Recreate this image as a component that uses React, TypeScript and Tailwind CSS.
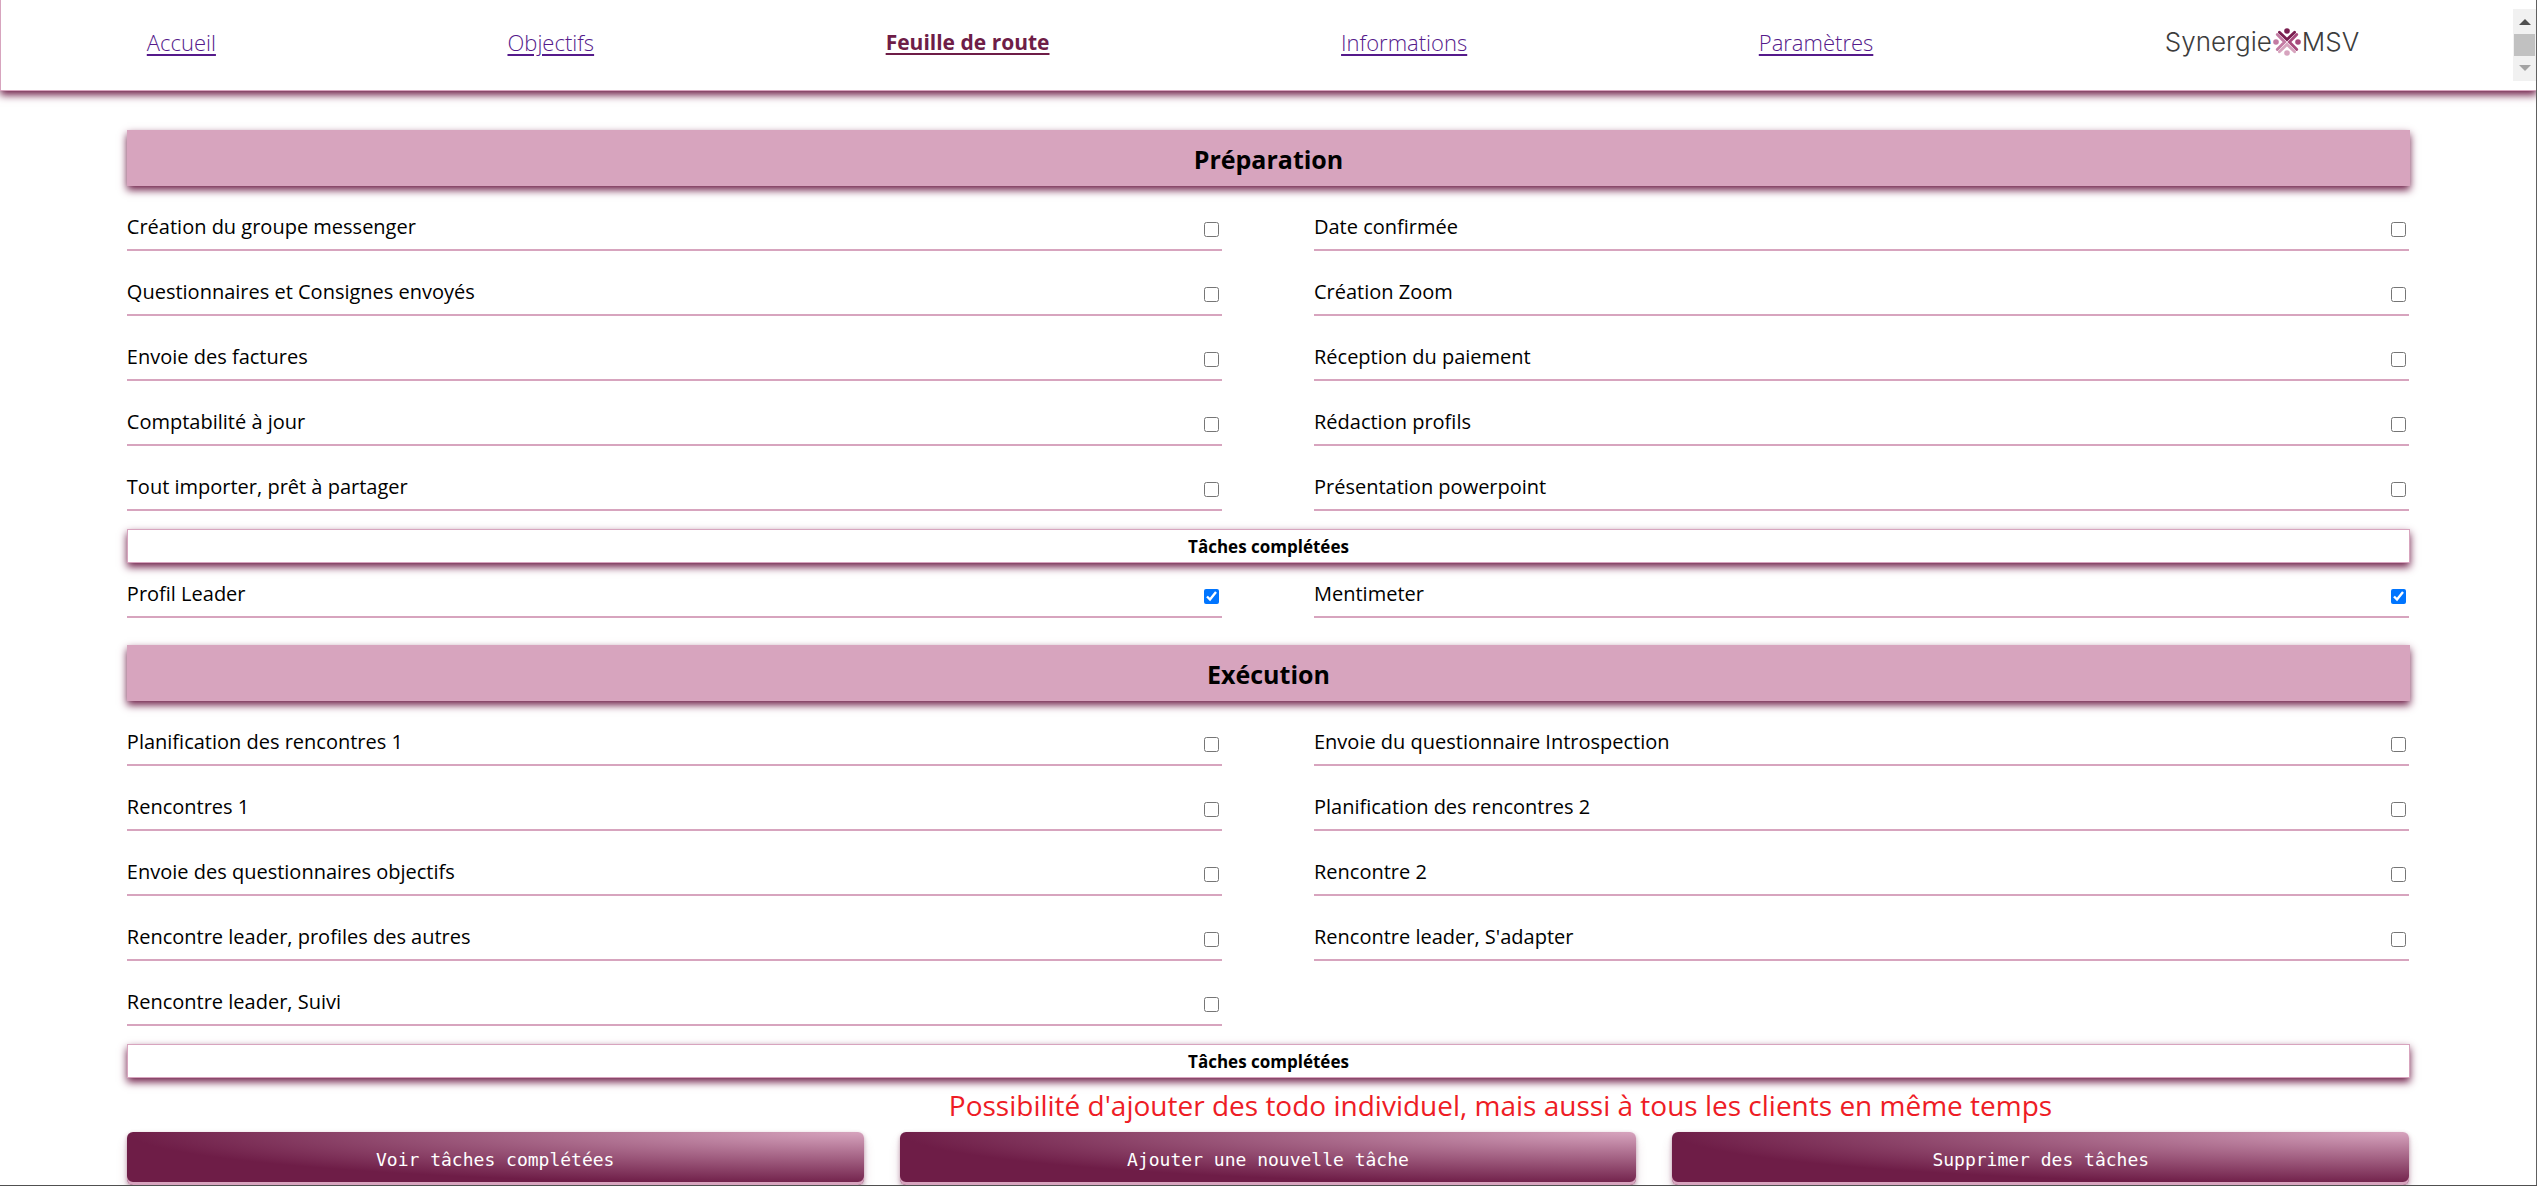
import React from "react";

type Task = { label: string; done?: boolean };

const preparation: Task[] = [
  { label: "Création du groupe messenger" },
  { label: "Date confirmée" },
  { label: "Questionnaires et Consignes envoyés" },
  { label: "Création Zoom" },
  { label: "Envoie des factures" },
  { label: "Réception du paiement" },
  { label: "Comptabilité à jour" },
  { label: "Rédaction profils" },
  { label: "Tout importer, prêt à partager" },
  { label: "Présentation powerpoint" },
];

const preparationDone: Task[] = [
  { label: "Profil Leader", done: true },
  { label: "Mentimeter", done: true },
];

const execution: Task[] = [
  { label: "Planification des rencontres 1" },
  { label: "Envoie du questionnaire Introspection" },
  { label: "Rencontres 1" },
  { label: "Planification des rencontres 2" },
  { label: "Envoie des questionnaires objectifs" },
  { label: "Rencontre 2" },
  { label: "Rencontre leader, profiles des autres" },
  { label: "Rencontre leader, S'adapter" },
  { label: "Rencontre leader, Suivi" },
];

const links = ["Accueil", "Objectifs", "Feuille de route", "Informations", "Paramètres"];
const actions = ["Voir tâches complétées", "Ajouter une nouvelle tâche", "Supprimer des tâches"];

/* One person of the emblem: a head and two raised arms, pointing up. */
function Person({ color, angle }: { color: string; angle: number }) {
  return (
    <g transform={`rotate(${angle} 14 14)`}>
      <circle cx="14" cy="3" r="2.8" fill={color} />
      <path d="M6.4 4.2 L14 11.6 L21.6 4.2" fill="none" stroke={color} strokeWidth="2.8" strokeLinecap="round" />
    </g>
  );
}

function Logo() {
  return (
    <div className="flex items-center font-['Inter',sans-serif] text-[26px] leading-8 font-light text-[#3c3c3c]">
      <span>Synergie</span>
      <svg viewBox="0 0 28 28" className="mx-px size-7" aria-hidden="true">
        <Person color="#c37ba3" angle={270} />
        <Person color="#a84a7c" angle={90} />
        <Person color="#d7a4be" angle={180} />
        <Person color="#7a1f50" angle={0} />
      </svg>
      <span>MSV</span>
    </div>
  );
}

function ScrollBar() {
  return (
    <div className="mt-[9px] flex h-18 w-[23px] shrink-0 flex-col items-center justify-between bg-[#f1f1f1] py-2.5" aria-hidden="true">
      <svg viewBox="0 0 12 6" className="h-1.5 w-3"><path d="M0 6 L6 0 L12 6Z" fill="#505050" /></svg>
      <div className="h-[22px] w-[21px] bg-[#c1c1c1]" />
      <svg viewBox="0 0 12 6" className="h-1.5 w-3"><path d="M0 0 L6 6 L12 0Z" fill="#a3a3a3" /></svg>
    </div>
  );
}

function Tasks({ tasks, done }: { tasks: Task[]; done?: boolean }) {
  return (
    <ul className={done ? "mr-px grid grid-cols-2 gap-x-23 pt-1.5 pb-[27px]" : "mr-px grid grid-cols-2 gap-x-23 gap-y-4 pt-4 pb-[18px]"}>
      {tasks.map((t) => (
        <li key={t.label}>
          <label className="flex h-[49px] items-center justify-between border-b-2 border-[#d7a4be]">
            <span className="pt-0.5 text-[20px] leading-7">{t.label}</span>
            <input type="checkbox" defaultChecked={t.done} className="mt-2 mr-[3px] size-[15px] accent-[#0075ff]" />
          </label>
        </li>
      ))}
    </ul>
  );
}

function Title({ children }: { children: string }) {
  return (
    <h2 className="h-14 bg-[#d7a4be] text-center text-[25px] leading-[58px] font-bold shadow-[0_4px_8px_#6e1d47]">{children}</h2>
  );
}

function DoneTitle() {
  return (
    <h3 className="h-[34px] border border-[#d7a4be] bg-white text-center text-[17px] leading-[34px] font-bold shadow-[0_4px_8px_#6e1d47]">
      Tâches complétées
    </h3>
  );
}

export default function App() {
  return (
    <div className="relative overflow-x-hidden border-b border-[#505050] bg-white font-['Open_Sans','Noto_Sans',sans-serif] text-black">
      <header className="flex h-[91px] border border-t-0 border-[#d7a4be] shadow-[0_4px_8px_#6e1d47]">
        <nav className="flex flex-1 items-center justify-around pr-2 pb-1.5 leading-8 text-[#551a8b]">
          {links.map((l) => (
            <a
              key={l}
              href="#"
              className={
                l === "Feuille de route"
                  ? "text-[21px] font-bold text-[#6e1d47] underline decoration-2 underline-offset-3"
                  : "text-[22px] font-light underline decoration-2 underline-offset-3"
              }
            >
              {l}
            </a>
          ))}
          <Logo />
        </nav>
        <ScrollBar />
      </header>

      <main className="mx-auto w-[90%] pt-[39px]">
        <Title>Préparation</Title>
        <Tasks tasks={preparation} />
        <DoneTitle />
        <Tasks tasks={preparationDone} done />
        <Title>Exécution</Title>
        <Tasks tasks={execution} />
        <DoneTitle />
        <p className="pt-2.5 pb-2.5 pl-[36%] text-[28px] leading-[34px] whitespace-nowrap text-[#ee1c25]">
          Possibilité d'ajouter des todo individuel, mais aussi à tous les clients en même temps
        </p>
        <div className="mr-px grid grid-cols-3 gap-x-9">
          {actions.map((a) => (
            <button
              key={a}
              type="button"
              className="h-[53px] rounded-md bg-[radial-gradient(100%_100%_at_100%_0%,#d7a4be_0%,#6e1d47_100%)] pt-0.5 font-['DejaVu_Sans_Mono',monospace] text-[18px] text-white shadow-[0_2px_4px_#6e1d4766,0_7px_13px_-3px_#6e1d474d,inset_0_-3px_0_#d7a4be]"
            >
              {a}
            </button>
          ))}
        </div>
      </main>
      <div className="absolute inset-y-0 right-0 w-px bg-[#606060]" />
    </div>
  );
}
